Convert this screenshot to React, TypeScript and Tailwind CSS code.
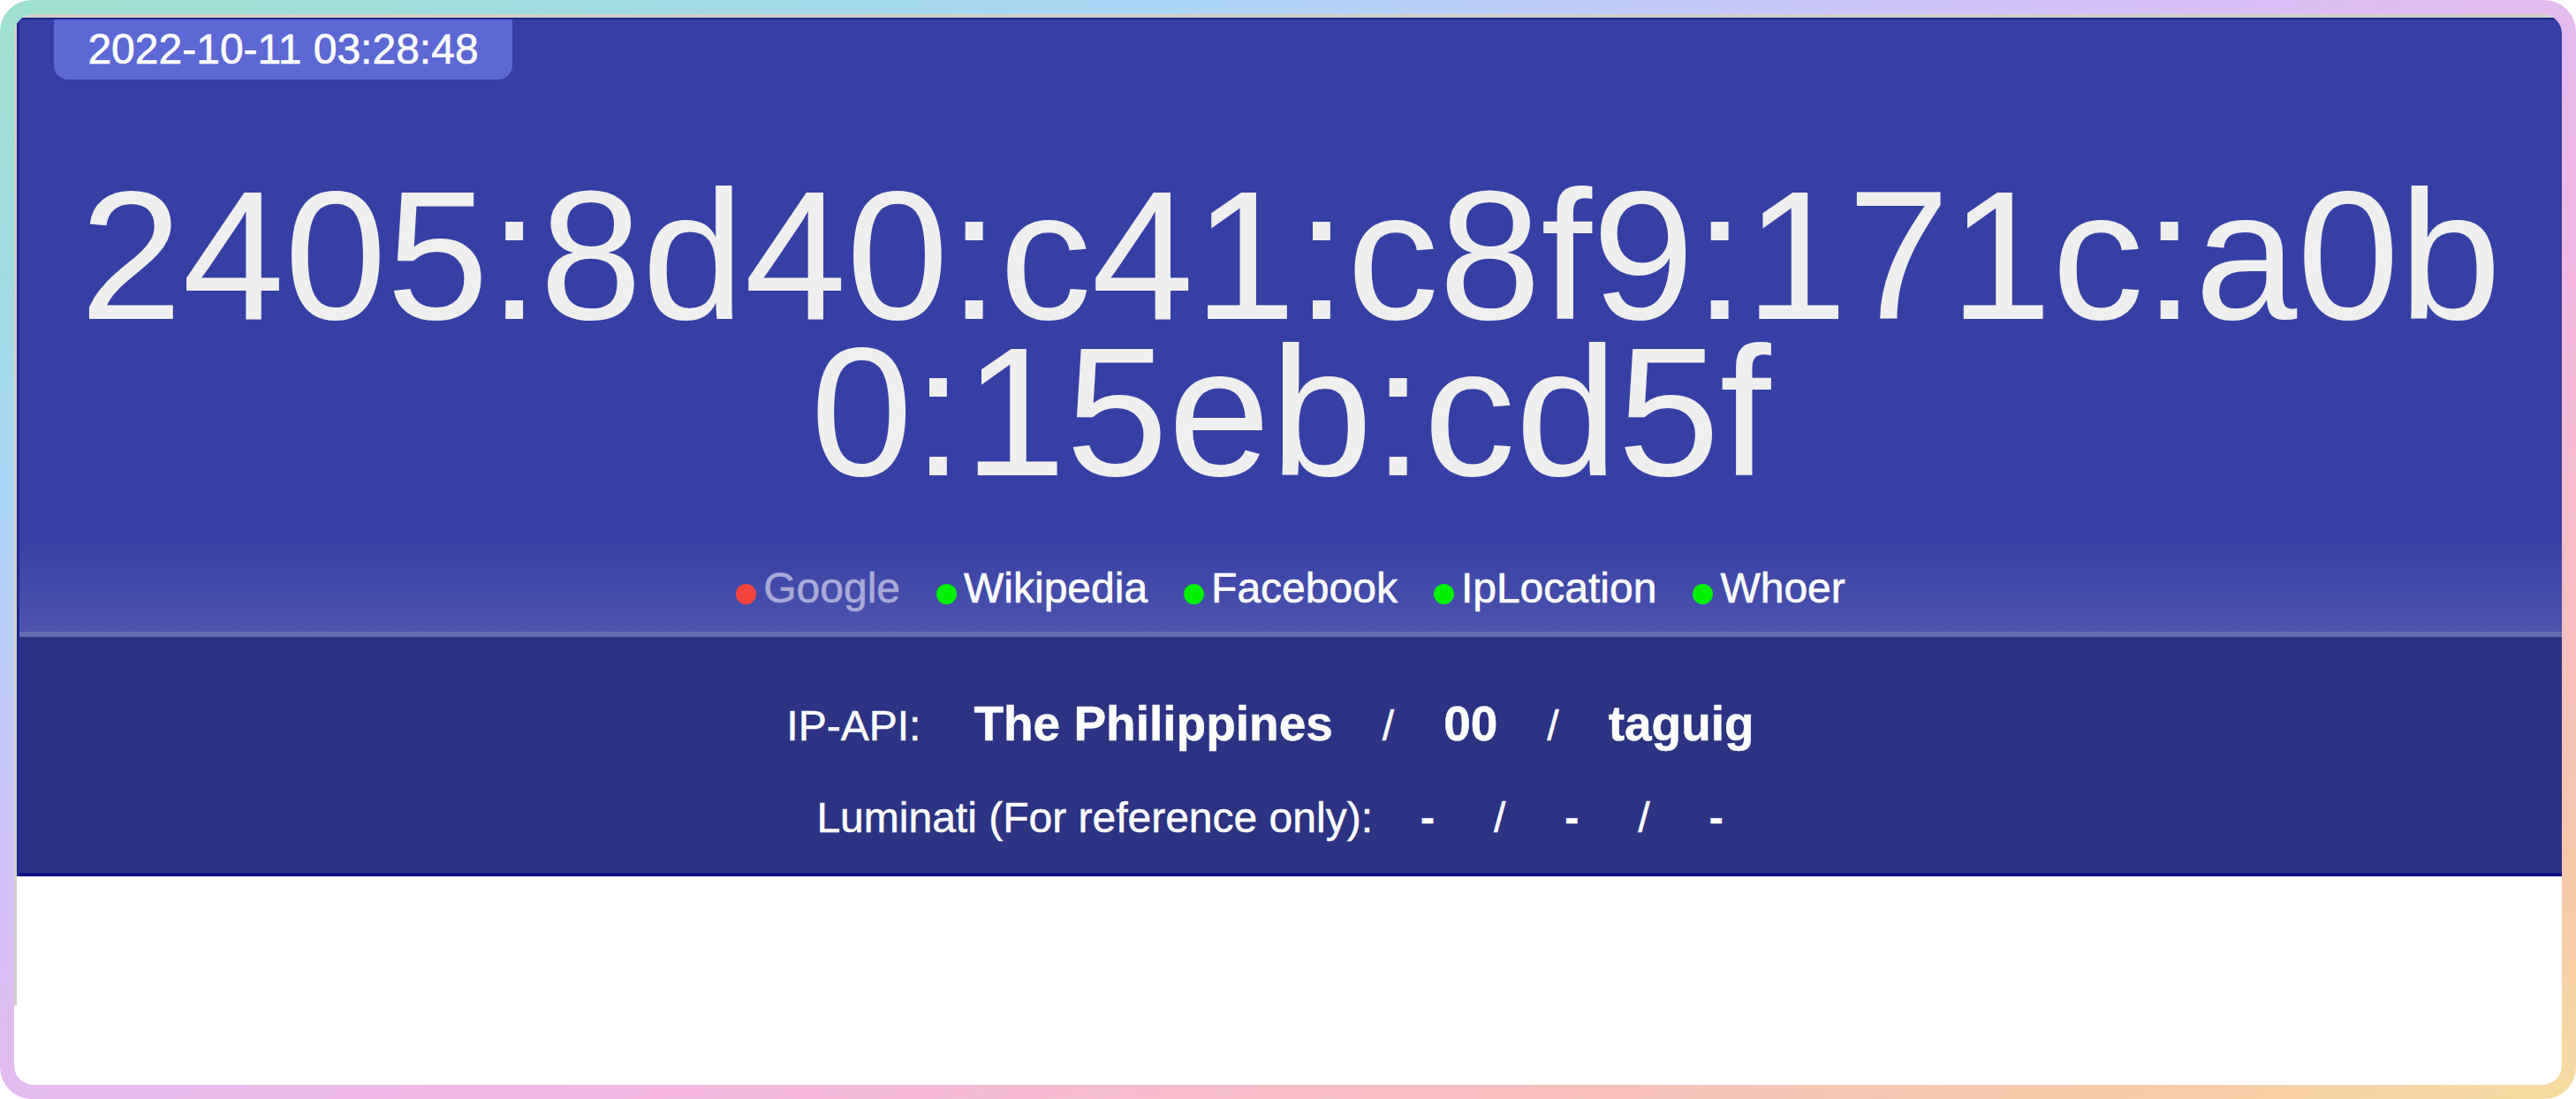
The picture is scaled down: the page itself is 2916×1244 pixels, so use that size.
const links = [
  { name: "Google", ok: false },
  { name: "Wikipedia", ok: true },
  { name: "Facebook", ok: true },
  { name: "IpLocation", ok: true },
  { name: "Whoer", ok: true },
];

export default function App() {
  return (
    <div className="w-[2916px] h-[1244px] bg-white font-['Liberation_Sans',Arial,sans-serif]">
      <div className="h-full rounded-[36px] p-4 bg-[linear-gradient(to_bottom_right,#9ee1cd_0%,#9fdbe2_12%,#a8d6f5_22%,#d2c0f8_40%,#e4baef_50%,#f4b6e2_62%,#f7c0bc_80%,#f7c8a8_90%,#f6dca0_100%)]">
        <div className="h-full rounded-[22px] bg-white overflow-hidden">
          <div className="h-[1122px] border-t-4 border-l-[3px] border-[#d2cfc6]">
            <div className="border-t-2 border-l-[3px] border-[#1f2890]">
              {/* header */}
              <div className="h-[693px] bg-[linear-gradient(to_bottom,#3640a4_84%,#4c54ad)]">
                <div className="ml-[39px] w-[519px] h-[68px] leading-[68px] text-center text-[48px] text-white bg-[#5c68d4] rounded-b-[16px] [-webkit-text-stroke:0.6px_currentColor]">
                  2022-10-11 03:28:48
                </div>
                <div className="mx-[39px] mt-[111px] text-center text-[208px] leading-[177px] text-[#efefef] break-all">
                  2405:8d40:c41:c8f9:171c:a0b0:15eb:cd5f
                </div>
                <div className="mt-[81px] flex justify-center gap-[41px] text-[48px] leading-[60px] [-webkit-text-stroke:0.6px_currentColor]">
                  {links.map((l) => (
                    <div key={l.name} className="flex items-center gap-[8px]">
                      <span
                        className={
                          "mt-[12px] inline-block w-[23px] h-[23px] rounded-full " +
                          (l.ok ? "bg-[#00f000]" : "bg-[#f4433c]")
                        }
                      />
                      <span className={l.ok ? "text-white" : "text-[#a9abd6]"}>{l.name}</span>
                    </div>
                  ))}
                </div>
              </div>
              <div className="h-[6px] bg-[#666cb2]" />
              {/* geo info */}
              <div className="h-[271px] bg-[#2b3382] border-b-4 border-[#0c1280] pt-[68px] text-white [-webkit-text-stroke:0.5px_currentColor]">
                <div className="flex justify-center items-baseline leading-[60px] pr-[46px]">
                  <span className="text-[48px] mr-[60px]">IP-API:</span>
                  <div className="flex items-baseline gap-[56px] text-[55px] font-bold">
                    <span>The Philippines</span>
                    <span className="text-[48px] font-normal">/</span>
                    <span>00</span>
                    <span className="text-[48px] font-normal">/</span>
                    <span>taguig</span>
                  </div>
                </div>
                <div className="mt-[44px] flex justify-center items-baseline leading-[60px] text-[48px] pr-[47px]">
                  <span className="mr-[54px]">Luminati (For reference only):</span>
                  <div className="flex items-baseline gap-[67px]">
                    <span className="font-bold">-</span>
                    <span>/</span>
                    <span className="font-bold">-</span>
                    <span>/</span>
                    <span className="font-bold">-</span>
                  </div>
                </div>
              </div>
            </div>
          </div>
        </div>
      </div>
    </div>
  );
}
